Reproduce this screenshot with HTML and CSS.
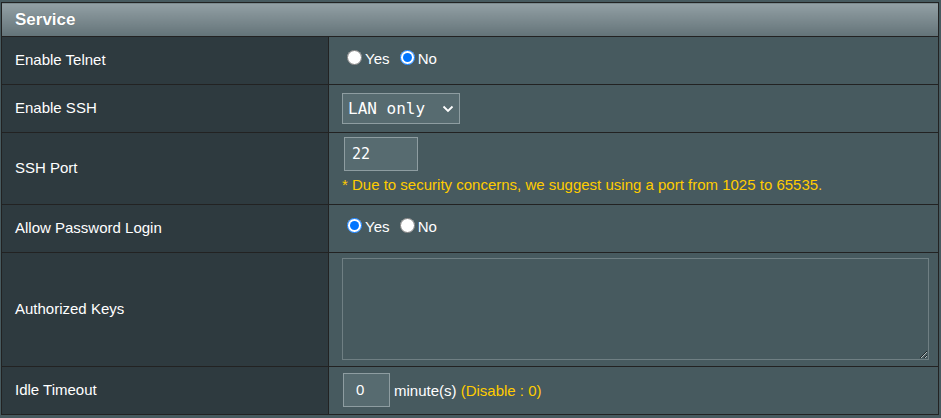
FILE: index.html
```html
<!DOCTYPE html>
<html>
<head>
<meta charset="utf-8">
<link rel="stylesheet" href="styles.css">
</head>
<body>
<table class="form-table">
  <colgroup>
    <col class="c-label">
    <col class="c-value">
  </colgroup>
  <thead>
    <tr><th colspan="2" class="head">Service</th></tr>
  </thead>
  <tbody>
    <tr class="row-std">
      <th>Enable Telnet</th>
      <td>
        <label class="radio"><input type="radio" name="telnet">Yes</label>
        <label class="radio"><input type="radio" name="telnet" checked>No</label>
      </td>
    </tr>
    <tr class="row-std">
      <th>Enable SSH</th>
      <td>
        <span class="select-wrap">
          <select class="select"><option>LAN only</option></select>
          <svg class="chev" width="12" height="8" viewBox="0 0 12 8"><path d="M1.5 1.5 L6 6 L10.5 1.5" fill="none" stroke="#ffffff" stroke-width="1.8"/></svg>
        </span>
      </td>
    </tr>
    <tr class="row-port">
      <th>SSH Port</th>
      <td class="port-cell">
        <input class="text-in port" type="text" value="22">
        <div class="hint">* Due to security concerns, we suggest using a port from 1025 to 65535.</div>
      </td>
    </tr>
    <tr class="row-std">
      <th>Allow Password Login</th>
      <td>
        <label class="radio"><input type="radio" name="pw" checked>Yes</label>
        <label class="radio"><input type="radio" name="pw">No</label>
      </td>
    </tr>
    <tr class="row-keys">
      <th>Authorized Keys</th>
      <td><textarea class="keys"></textarea></td>
    </tr>
    <tr class="row-std">
      <th>Idle Timeout</th>
      <td>
        <input class="text-in idle" type="text" value="0"><span class="unit">minute(s)</span> <span class="hint-inline">(Disable : 0)</span>
      </td>
    </tr>
  </tbody>
</table>
</body>
</html>
```

FILE: styles.css
```css
html, body {
  margin: 0;
  padding: 0;
  background: #475a5f;
}
body {
  padding: 2px 0 0 1px;
  font-family: "Liberation Sans", Arial, sans-serif;
  font-size: 15px;
  color: #ffffff;
}
.form-table {
  border-collapse: collapse;
  width: 938px;
  table-layout: fixed;
}
.c-label { width: 327px; }
.form-table th,
.form-table td {
  border: 1px solid #222222;
  padding: 0;
  vertical-align: middle;
  text-align: left;
}
.form-table th.head {
  height: 33px;
  background: linear-gradient(#93a0a5, #637378);
  font-weight: bold;
  font-size: 17px;
  padding-left: 13px;
  text-shadow: 0 0 1px rgba(0,0,0,0.3);
}
.form-table tbody th {
  background: #2e3a3f;
  font-weight: normal;
  padding: 0 0 2px 13px;
}
.form-table td {
  background: #475a5f;
  padding: 0 0 2px 13px;
}
.row-std th, .row-std td { height: 45px; }
.row-port th { height: 69px; }
.form-table td.port-cell {
  vertical-align: top;
  padding: 4px 0 0 13px;
  height: 67px;
}
.row-keys th, .row-keys td { height: 111px; }

.radio {
  display: inline-flex;
  align-items: center;
  margin-right: 1px;
}
.radio input {
  margin: 0 3px 0 5px;
  width: 15px;
  height: 15px;
  position: relative;
  top: -1px;
}
.select-wrap {
  position: relative;
  display: inline-block;
  vertical-align: middle;
  margin-top: 2px;
}
.select {
  appearance: none;
  -webkit-appearance: none;
  width: 118px;
  height: 31px;
  background: #576b70;
  border: 1px solid #8e9da1;
  border-radius: 0;
  color: #ffffff;
  font-family: "DejaVu Sans Mono", monospace;
  font-size: 16px;
  padding: 0 0 0 5px;
  margin: 0;
}
.chev {
  position: absolute;
  right: 6px;
  top: 12px;
}
.text-in {
  box-sizing: border-box;
  background: #576b70;
  border: 1px solid #8e9da1;
  color: #ffffff;
  margin: 0;
  padding: 0 0 0 7px;
  outline: none;
}
.port {
  display: block;
  width: 74px;
  height: 34px;
  margin: 0 0 0 2px;
  font-family: "DejaVu Sans Mono", monospace;
  font-size: 15px;
}
.hint {
  color: #ffcc00;
  margin-top: 5px;
}
.keys {
  display: block;
  box-sizing: border-box;
  width: 587px;
  height: 102px;
  margin: 0;
  background: #475a5f;
  border: 1px solid #6f7f83;
  color: #ffffff;
}
.idle {
  width: 47px;
  height: 34px;
  margin: 0 4px 0 1px;
  padding-left: 12px;
  font-family: "Liberation Sans", Arial, sans-serif;
  font-size: 15px;
  vertical-align: middle;
}
.unit { vertical-align: middle; }
.hint-inline { color: #ffcc00; vertical-align: middle; }
```
